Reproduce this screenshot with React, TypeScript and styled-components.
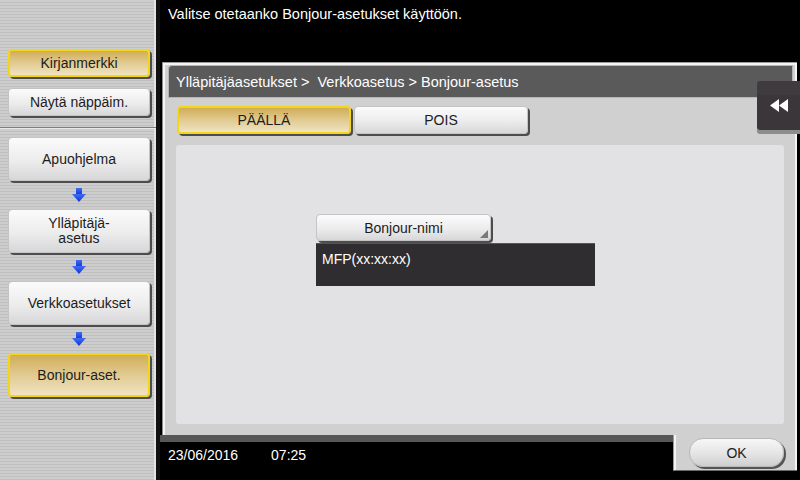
import React from "react";
import styled, { createGlobalStyle, css } from "styled-components";

const Global = createGlobalStyle`
  html, body { margin: 0; padding: 0; background: #000; }
  body { font-family: "Liberation Sans", Arial, sans-serif; }
  * { box-sizing: border-box; }
`;

const Screen = styled.div`
  width: 800px;
  height: 480px;
  display: flex;
  overflow: hidden;
  position: relative;
  background: #000;
  font-family: "Liberation Sans", Arial, sans-serif;
  font-size: 14px;
`;

const Sidebar = styled.div`
  width: 160px;
  height: 480px;
  display: flex;
  flex-direction: column;
  background: repeating-linear-gradient(
    to bottom,
    #cdcdcd 0px,
    #cdcdcd 2px,
    #bfbfbf 2px,
    #bfbfbf 3px
  );
  border-right: 4px solid #111;
  box-shadow: inset -2px 0 0 #e4e4e4;
`;

const SideTop = styled.div`
  height: 128px;
  padding: 49px 0 0 8px;
  display: flex;
  flex-direction: column;
  gap: 11px;
  border-bottom: 1px solid #7d7d7d;
  box-shadow: 0 1px 0 #e8e8e8;
`;

const SideFlow = styled.div`
  padding: 9px 0 0 8px;
  display: flex;
  flex-direction: column;
`;

const goldLook = css`
  background: linear-gradient(to bottom, #d0ad57 0%, #e0c88c 45%, #efe3c1 100%);
  border: 2px solid #f3d51a;
`;

const whiteLook = css`
  background: linear-gradient(to bottom, #fbfbfb 0%, #ececed 55%, #d7d7d9 100%);
  border: 1px solid #c4c4c4;
`;

const SideButton = styled.div<{ $gold?: boolean; $tall?: boolean }>`
  width: 142px;
  height: ${(p) => (p.$tall ? 44 : 28)}px;
  border-radius: 4px;
  display: flex;
  align-items: center;
  justify-content: center;
  text-align: center;
  line-height: 15px;
  color: #1c1c1c;
  font-size: 14px;
  box-shadow: 2px 2px 0 #4d4d4d;
  ${(p) => (p.$gold ? goldLook : whiteLook)}
`;

const ArrowRow = styled.div`
  width: 142px;
  height: 28px;
  display: flex;
  align-items: center;
  justify-content: center;
`;

const Main = styled.div`
  width: 640px;
  display: flex;
  flex-direction: column;
  background: #000;
`;

const Message = styled.div`
  height: 62px;
  padding: 6px 0 0 8px;
  color: #fff;
  font-size: 14.5px;
`;

const Panel = styled.div`
  margin-left: 2px;
  width: 635px;
  height: 373px;
  background: #d0d0d0;
  border-top: 1px solid #9a9a9a;
  border-left: 1px solid #8a8a8a;
  box-shadow: inset 2px 2px 0 #f4f4f4, inset -2px 0 0 #f4f4f4;
  padding: 2px 4px 0 5px;
  display: flex;
  flex-direction: column;
`;

const Crumb = styled.div`
  height: 33px;
  background: #5b5a5b;
  border: 1px solid #b5b5b5;
  border-radius: 4px 0 0 0;
  color: #fff;
  font-size: 14.5px;
  padding: 0 0 0 7px;
  display: flex;
  align-items: center;
`;

const ToggleRow = styled.div`
  display: flex;
  gap: 3px;
  padding: 8px 0 0 9px;
`;

const Toggle = styled.div<{ $gold?: boolean }>`
  width: 174px;
  height: 28px;
  border-radius: 4px;
  display: flex;
  align-items: center;
  justify-content: center;
  color: #1c1c1c;
  font-size: 14px;
  box-shadow: 2px 2px 0 #4d4d4d;
  ${(p) => (p.$gold ? goldLook : whiteLook)}
`;

const ContentBox = styled.div`
  margin: 11px 0 0 8px;
  width: 608px;
  height: 279px;
  background: #e2e1e3;
  border-radius: 3px;
  padding: 69px 0 0 140px;
  display: flex;
  flex-direction: column;
  gap: 2px;
`;

const NameButton = styled.div`
  position: relative;
  width: 175px;
  height: 27px;
  border-radius: 4px;
  display: flex;
  align-items: center;
  justify-content: center;
  color: #1c1c1c;
  font-size: 14px;
  box-shadow: 2px 2px 0 #4d4d4d;
  ${whiteLook}
  &::after {
    content: "";
    position: absolute;
    right: 2px;
    bottom: 2px;
    width: 0;
    height: 0;
    border-left: 8px solid transparent;
    border-bottom: 8px solid #7a7a7a;
  }
`;

const NameDisplay = styled.div`
  width: 279px;
  height: 43px;
  background: #2f2d30;
  border-top: 1px solid #555;
  color: #fff;
  font-size: 14px;
  padding: 7px 0 0 6px;
`;

const Footer = styled.div`
  display: flex;
  height: 45px;
`;

const DateBar = styled.div`
  width: 513px;
  border-top: 7px solid #575757;
  color: #fff;
  font-size: 14px;
  padding: 5px 0 0 8px;
  display: flex;
  gap: 33px;
`;

const OkTab = styled.div`
  width: 124px;
  height: 36px;
  background: #d0d0d0;
  border-left: 1px solid #9a9a9a;
  box-shadow: inset 2px 0 0 #f4f4f4, inset -2px 0 0 #f4f4f4;
  border-bottom: 1px solid #6a6a6a;
  padding: 3px 0 0 15px;
`;

const OkButton = styled.div`
  width: 95px;
  height: 29px;
  border-radius: 14px;
  display: flex;
  align-items: center;
  justify-content: center;
  color: #1c1c1c;
  font-size: 14px;
  background: linear-gradient(to bottom, #f7f7f7 0%, #e4e4e5 55%, #cfcfd1 100%);
  border: 1px solid #b8b8b8;
  box-shadow: 2px 2px 0 #555;
`;

const SideTab = styled.div`
  position: absolute;
  right: 0;
  top: 81px;
  width: 43px;
  height: 49px;
  background: linear-gradient(to bottom, #3f3b3e 0%, #3f3b3e 28%, #3a3639 28%, #3a3639 100%);
  border-radius: 3px 0 0 3px;
  box-shadow: 0 4px 0 #8c8c8c;
  display: flex;
  align-items: center;
  justify-content: center;
`;

const DownArrow = () => (
  <svg width="14" height="15" viewBox="0 0 14 15">
    <defs>
      <linearGradient id="ag" x1="0" y1="0" x2="0" y2="1">
        <stop offset="0" stopColor="#3d6cf5" />
        <stop offset="1" stopColor="#1434d6" />
      </linearGradient>
    </defs>
    <rect x="4" y="0" width="6" height="7" fill="url(#ag)" />
    <polygon points="0,6 14,6 7,14" fill="url(#ag)" />
  </svg>
);

const Rewind = () => (
  <svg width="18" height="13" viewBox="0 0 18 13">
    <polygon points="9,0 0,6.5 9,13" fill="#fff" />
    <polygon points="18,0 9,6.5 18,13" fill="#fff" />
  </svg>
);

export default function App() {
  return (
    <Screen>
      <Global />
      <Sidebar>
        <SideTop>
          <SideButton $gold>Kirjanmerkki</SideButton>
          <SideButton>Näytä näppäim.</SideButton>
        </SideTop>
        <SideFlow>
          <SideButton $tall>Apuohjelma</SideButton>
          <ArrowRow>
            <DownArrow />
          </ArrowRow>
          <SideButton $tall>
            Ylläpitäjä-
            <br />
            asetus
          </SideButton>
          <ArrowRow>
            <DownArrow />
          </ArrowRow>
          <SideButton $tall>Verkkoasetukset</SideButton>
          <ArrowRow>
            <DownArrow />
          </ArrowRow>
          <SideButton $tall $gold>
            Bonjour-aset.
          </SideButton>
        </SideFlow>
      </Sidebar>
      <Main>
        <Message>Valitse otetaanko Bonjour-asetukset käyttöön.</Message>
        <Panel>
          <Crumb>Ylläpitäjäasetukset &gt;&nbsp; Verkkoasetus &gt; Bonjour-asetus</Crumb>
          <ToggleRow>
            <Toggle $gold>PÄÄLLÄ</Toggle>
            <Toggle>POIS</Toggle>
          </ToggleRow>
          <ContentBox>
            <NameButton>Bonjour-nimi</NameButton>
            <NameDisplay>MFP(xx:xx:xx)</NameDisplay>
          </ContentBox>
        </Panel>
        <Footer>
          <DateBar>
            <span>23/06/2016</span>
            <span>07:25</span>
          </DateBar>
          <OkTab>
            <OkButton>OK</OkButton>
          </OkTab>
        </Footer>
      </Main>
      <SideTab>
        <Rewind />
      </SideTab>
    </Screen>
  );
}
